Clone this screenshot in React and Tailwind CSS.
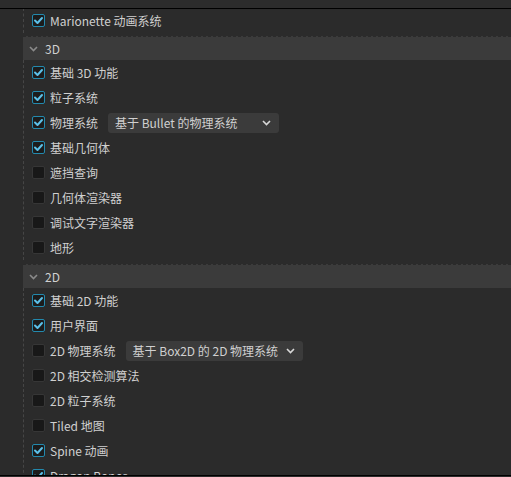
import React from "react";

const font = { fontFamily: '"Noto Sans CJK SC", "Noto Sans", sans-serif' };

function Check({ checked }) {
  if (checked) {
    return (
      <span className="flex h-[13px] w-[13px] shrink-0 items-center justify-center rounded-[2px] border border-[#2389ad] bg-[#1c1c1c]">
        <svg width="11" height="11" viewBox="0 0 11 11">
          <path d="M2 5.5 L4.5 8 L9 3" fill="none" stroke="#5cc0e8" strokeWidth="2" strokeLinecap="round" strokeLinejoin="round" />
        </svg>
      </span>
    );
  }
  return <span className="h-[13px] w-[13px] shrink-0 rounded-[2px] border border-[#363636] bg-[#181818]" />;
}

function Chevron({ color = "#d8d8d8" }) {
  return (
    <svg width="9" height="6" viewBox="0 0 9 6" className="shrink-0">
      <path d="M1 1 L4.5 4.5 L8 1" fill="none" stroke={color} strokeWidth="1.6" />
    </svg>
  );
}

function Row({ checked, label, select, selectW }) {
  return (
    <div className="flex h-[25px] shrink-0 items-center pl-[8px]">
      <Check checked={checked} />
      <span className="ml-[5px] whitespace-nowrap text-[12px] text-[#d0d0d0]">{label}</span>
      {select && (
        <div className={`ml-[10px] flex h-[20px] items-center justify-between rounded-[3px] bg-[#3b3b3b] pl-[7px] pr-[8px] ${selectW}`}>
          <span className="whitespace-nowrap text-[12px] text-[#d0d0d0]">{select}</span>
          <Chevron />
        </div>
      )}
    </div>
  );
}

function Header({ title, mt }) {
  return (
    <div className={`${mt} flex h-[24px] shrink-0 items-center border-t border-dashed border-[#2a2a2a] bg-[#3b3b3b] pl-[6px]`}>
      <Chevron color="#8a8a8a" />
      <span className="ml-[7px] text-[12px] text-[#d0d0d0]">{title}</span>
    </div>
  );
}

export default function App() {
  return (
    <div className="flex h-[477px] w-[511px] flex-col bg-[#2b2b2b]" style={font}>
      <div className="h-[9px] shrink-0 border-b border-black bg-[#2c2c2c]" />
      <div className="flex h-[466px] shrink-0 overflow-hidden">
        <div className="w-[23px] shrink-0" />
        <div className="-mt-px flex flex-1 flex-col">
          <div className="shrink-0 border-l border-dashed border-[#464646]">
            <Row checked label="Marionette 动画系统" />
          </div>
          <Header title="3D" mt="mt-[3px]" />
          <div className="shrink-0 border-l border-dashed border-[#464646]">
            <Row checked label="基础 3D 功能" />
            <Row checked label="粒子系统" />
            <Row checked label="物理系统" select="基于 Bullet 的物理系统" selectW="w-[171px]" />
            <Row checked label="基础几何体" />
            <Row label="遮挡查询" />
            <Row label="几何体渲染器" />
            <Row label="调试文字渲染器" />
            <Row label="地形" />
          </div>
          <Header title="2D" mt="mt-[4px]" />
          <div className="shrink-0 border-l border-dashed border-[#464646]">
            <Row checked label="基础 2D 功能" />
            <Row checked label="用户界面" />
            <Row label="2D 物理系统" select="基于 Box2D 的 2D 物理系统" selectW="w-[177px]" />
            <Row label="2D 相交检测算法" />
            <Row label="2D 粒子系统" />
            <Row label="Tiled 地图" />
            <Row checked label="Spine 动画" />
            <Row checked label="Dragon Bones" />
          </div>
        </div>
      </div>
      <div className="h-[2px] shrink-0 border-t border-black bg-[#2b2b2b]" />
    </div>
  );
}
